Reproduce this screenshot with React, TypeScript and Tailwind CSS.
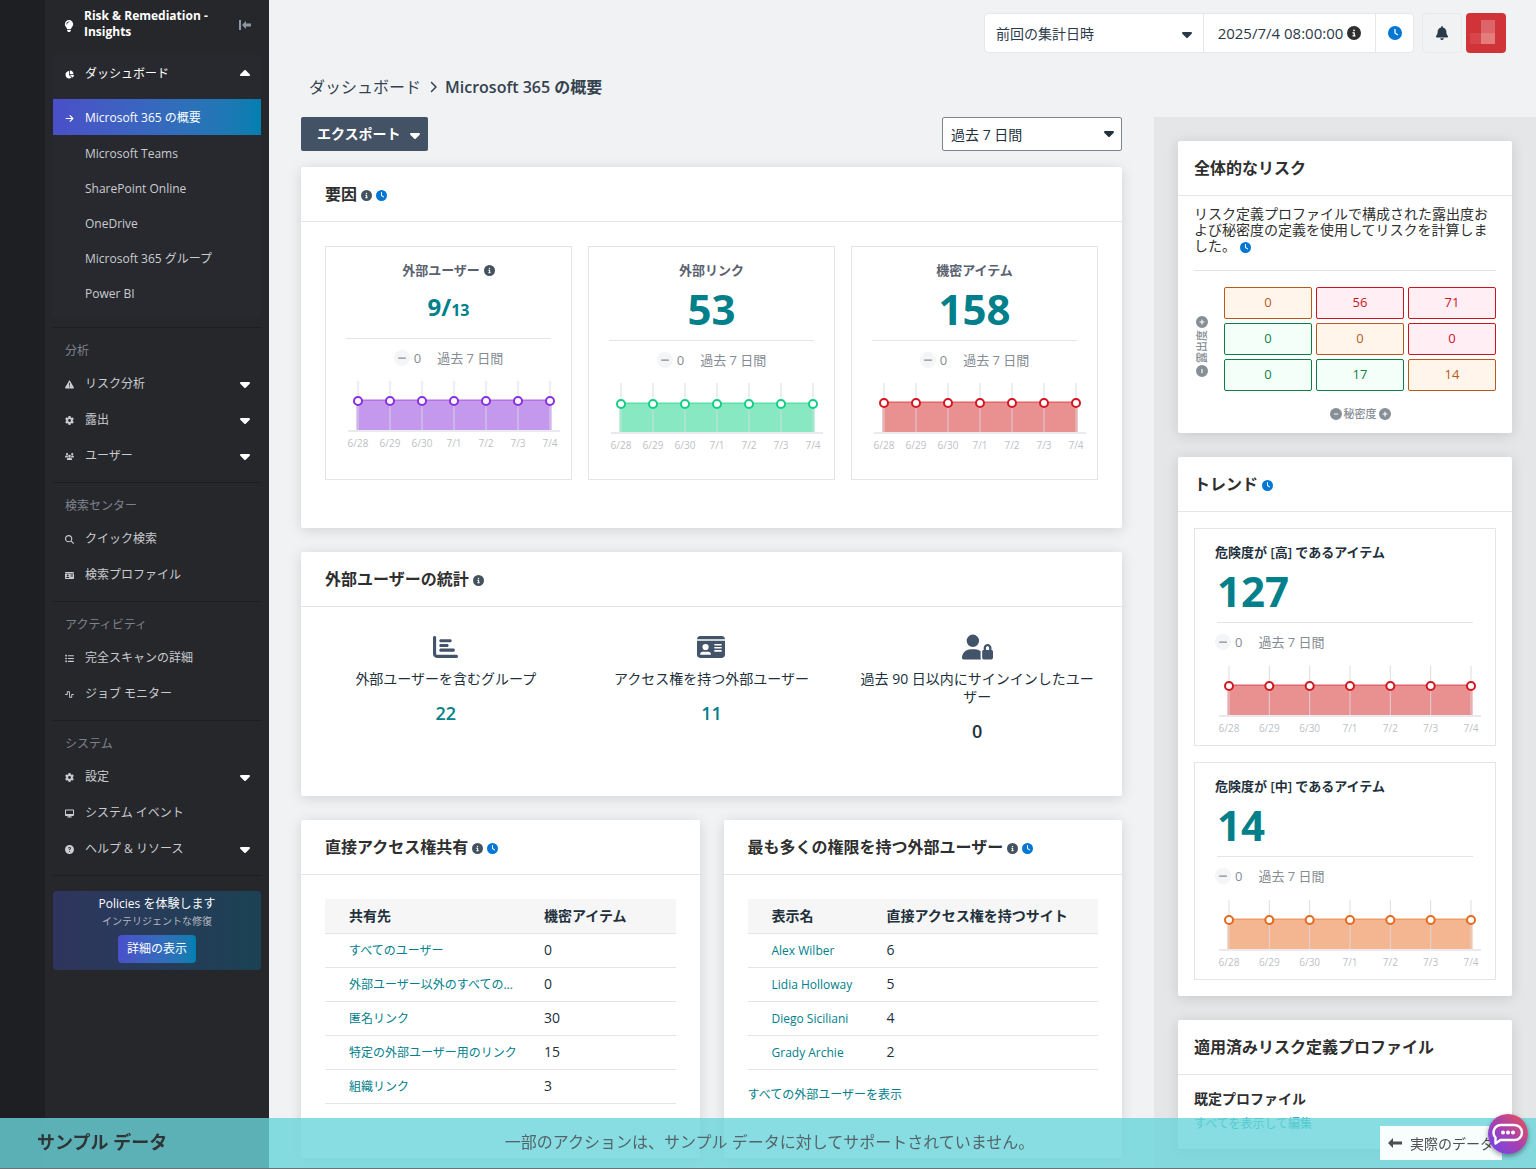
import type { ReactNode } from 'react'
import type { IconType } from 'react-icons'
import {
  FaArrowRight,
  FaBell,
  FaCaretDown,
  FaCaretUp,
  FaChartBar,
  FaChartPie,
  FaChevronRight,
  FaCircleInfo,
  FaCircleMinus,
  FaCirclePlus,
  FaCircleQuestion,
  FaClock,
  FaDesktop,
  FaGear,
  FaIdCard,
  FaLightbulb,
  FaList,
  FaMagnifyingGlass,
  FaMinus,
  FaTriangleExclamation,
  FaUserLock,
  FaUsers,
  FaWaveSquare,
} from 'react-icons/fa6'

interface NavItem {
  label: string
  icon: IconType
  expandable?: boolean
}

interface NavSection {
  title: string
  items: NavItem[]
}

const dashboardLinks = ['Microsoft Teams', 'SharePoint Online', 'OneDrive', 'Microsoft 365 グループ', 'Power BI']

const navSections: NavSection[] = [
  {
    title: '分析',
    items: [
      { label: 'リスク分析', icon: FaTriangleExclamation, expandable: true },
      { label: '露出', icon: FaGear, expandable: true },
      { label: 'ユーザー', icon: FaUsers, expandable: true },
    ],
  },
  {
    title: '検索センター',
    items: [
      { label: 'クイック検索', icon: FaMagnifyingGlass },
      { label: '検索プロファイル', icon: FaIdCard },
    ],
  },
  {
    title: 'アクティビティ',
    items: [
      { label: '完全スキャンの詳細', icon: FaList },
      { label: 'ジョブ モニター', icon: FaWaveSquare },
    ],
  },
  {
    title: 'システム',
    items: [
      { label: '設定', icon: FaGear, expandable: true },
      { label: 'システム イベント', icon: FaDesktop },
      { label: 'ヘルプ & リソース', icon: FaCircleQuestion, expandable: true },
    ],
  },
]

const days = ['6/28', '6/29', '6/30', '7/1', '7/2', '7/3', '7/4']

const sharedWith = [
  { name: 'すべてのユーザー', count: 0 },
  { name: '外部ユーザー以外のすべての...', count: 0 },
  { name: '匿名リンク', count: 30 },
  { name: '特定の外部ユーザー用のリンク', count: 15 },
  { name: '組織リンク', count: 3 },
]

const topUsers = [
  { name: 'Alex Wilber', count: 6 },
  { name: 'Lidia Holloway', count: 5 },
  { name: 'Diego Siciliani', count: 4 },
  { name: 'Grady Archie', count: 2 },
]

const riskStyles = {
  high: 'border-[#c9151f] bg-[#ffeef4] text-[#c9151f]',
  medium: 'border-[#b85a1e] bg-[#fff5ea] text-[#b85a1e]',
  low: 'border-[#0b8043] bg-[#f5fffa] text-[#0b8043]',
}

const riskCells: { value: number; level: keyof typeof riskStyles }[] = [
  { value: 0, level: 'medium' },
  { value: 56, level: 'high' },
  { value: 71, level: 'high' },
  { value: 0, level: 'low' },
  { value: 0, level: 'medium' },
  { value: 0, level: 'high' },
  { value: 0, level: 'low' },
  { value: 17, level: 'low' },
  { value: 14, level: 'medium' },
]

function Sidebar() {
  return (
    <div className="flex shrink-0 bg-[#26272b] text-xs text-[#c9ccd1]">
      <div className="w-[45px] bg-[#1e1f23]" />
      <nav className="w-56 px-2" aria-label="メイン メニュー">
        <div className="flex h-[55px] pl-[10px] pr-[10px] pt-2">
          <span className="w-[21px]">
            <FaLightbulb className="mt-3 text-xs text-white" />
          </span>
          <p className="flex-1 font-bold leading-4 text-white">
            Risk &amp; Remediation -<br />
            Insights
          </p>
          <button type="button" aria-label="メニューを折りたたむ" className="mt-3 self-start text-[#8f96a3]">
            <svg width="12" height="10" viewBox="0 0 12 10" fill="currentColor">
              <path d="M0 0h2v10H0zM3 5l4-4v2.600h5v2.800H7V9z" />
            </svg>
          </button>
        </div>

        <div className="bg-[#28292e] pb-[6px]">
          <button type="button" className="mb-2 flex h-9 w-full items-center pl-3 pr-2 pt-[2px] text-white">
            <span className="w-5">
              <FaChartPie className="text-[9px]" />
            </span>
            <span className="flex-1 text-left">ダッシュボード</span>
            <FaCaretUp className="text-base" />
          </button>
          <a
            href="#overview"
            className="flex h-9 items-center bg-linear-to-r from-[#4a4fc9] to-[#007fb0] pl-3 pt-[2px] text-white"
          >
            <span className="w-5">
              <FaArrowRight className="text-[9px]" />
            </span>
            Microsoft 365 の概要
          </a>
          <div className="pt-px">
            {dashboardLinks.map((label) => (
              <a key={label} href="#dashboard" className="flex h-[35px] items-center pl-8">
                {label}
              </a>
            ))}
          </div>
        </div>
        <div className="h-[10px]" />

        {navSections.map((section) => (
          <section key={section.title} className="border-t border-[#1c1d20] pb-2 pt-[13px]">
            <h2 className="mb-[5px] pl-3 leading-5 text-[#7d838e]">{section.title}</h2>
            {section.items.map(({ label, icon: Icon, expandable }) => (
              <a key={label} href="#menu" className="flex h-9 items-center pl-3 pr-2">
                <span className="w-5">
                  <Icon className="text-[9px]" />
                </span>
                <span className="flex-1">{label}</span>
                {expandable && <FaCaretDown className="text-base text-white" />}
              </a>
            ))}
          </section>
        ))}

        <div className="border-t border-[#1c1d20] pt-[15px]">
          <div className="flex flex-col items-center rounded bg-linear-to-r from-[#2f355e] to-[#1b4254] pb-[7px] pt-1">
            <p className="leading-[18px] text-white">Policies を体験します</p>
            <p className="text-[10px] leading-4 text-[#b4b8c0]">インテリジェントな修復</p>
            <button
              type="button"
              className="mt-[6px] h-7 rounded bg-linear-to-r from-[#4a4fc9] to-[#007fb0] px-[9px] text-white"
            >
              詳細の表示
            </button>
          </div>
        </div>
      </nav>
    </div>
  )
}

function Header() {
  return (
    <header className="flex h-[66px] items-center justify-end pr-[30px] text-[#2b3a4a]">
      <div className="flex h-10 rounded border border-[#e6e7e9] bg-white">
        <div className="relative w-[219px] border-r border-[#e6e7e9]">
          <select
            aria-label="集計日時"
            className="h-full w-full appearance-none bg-transparent pl-[11px] pr-8 text-[14px] outline-none"
          >
            <option>前回の集計日時</option>
          </select>
          <FaCaretDown className="pointer-events-none absolute right-2 top-3 text-base" />
        </div>
        <div className="flex w-[172px] items-center justify-center gap-1 border-r border-[#e6e7e9] text-[15px]">
          2025/7/4 08:00:00
          <FaCircleInfo className="text-[14px] text-[#2f2f2f]" />
        </div>
        <button type="button" aria-label="更新時刻" className="flex w-[37px] items-center justify-center">
          <FaClock className="text-[14px] text-[#0077d4]" />
        </button>
      </div>
      <button
        type="button"
        aria-label="通知"
        className="ml-2 flex h-10 w-10 items-center justify-center rounded border border-[#e8e9eb]"
      >
        <FaBell className="text-[14px]" />
      </button>
      <button type="button" aria-label="アカウント" className="ml-1 flex h-10 w-10 items-start rounded bg-[#d13438]">
        <svg width="40" height="40" viewBox="0 0 40 40">
          <path d="M15 7h14v13H15z" fill="#dd6468" />
          <path d="M4 20h11v11H4z" fill="#d5454a" />
          <path d="M15 20h14v11H15z" fill="#e57d7c" />
        </svg>
      </button>
    </header>
  )
}

function Card({
  title,
  info,
  clock,
  narrow,
  children,
}: {
  title: string
  info?: boolean
  clock?: boolean
  narrow?: boolean
  children: ReactNode
}) {
  return (
    <section className="rounded-xs bg-white shadow-[0_2px_14px_rgba(0,0,0,0.13)]">
      <div
        className={`flex h-[55px] items-center gap-1 border-b border-[#e4e5e7] pb-px text-base font-bold text-[#2f2f2f] ${
          narrow ? 'px-4' : 'px-6'
        }`}
      >
        <h2>{title}</h2>
        {info && <FaCircleInfo className="mt-[3px] text-[11px] text-[#43525f]" />}
        {clock && <FaClock className="mt-[3px] text-[11px] text-[#0077d4]" />}
      </div>
      {children}
    </section>
  )
}

interface ChartProps {
  width: number
  start: number
  end: number
  y: number
  line: string
  fill: string
}

// Area chart with one flat value per day
function AreaChart({ width, start, end, y, line, fill }: ChartProps) {
  const step = (end - start) / (days.length - 1)
  return (
    <svg viewBox={`0 0 ${width} 70`} className="block w-full" role="img" aria-label="過去 7 日間">
      {days.map((day, i) => (
        <path key={day} d={`M${start + i * step} 0V50`} stroke="#dcdde3" />
      ))}
      <rect x={start - 1.5} y={y - 1} width={end - start + 3} height={51 - y} fill={fill} />
      <path d={`M${start} ${y - 1}H${end}`} stroke={line} strokeOpacity="0.7" />
      {days.map((day, i) => (
        <path key={day} d={`M${start + i * step} ${y}V50`} stroke="#dcdde3" strokeOpacity="0.8" />
      ))}
      <path d={`M${start - 10} 50H${end + 10}`} stroke="#e9e9ee" strokeWidth="2" />
      {days.map((day, i) => (
        <g key={day}>
          <circle cx={start + i * step} cy={y} r="4" fill="#fff" stroke={line} strokeWidth="2" />
          <text x={start + i * step} y="66" textAnchor="middle" fontSize="10" fill="#bdbfc5">
            {day}
          </text>
        </g>
      ))}
    </svg>
  )
}

function Delta() {
  return (
    <p className="flex items-center text-[13px] leading-4 text-[#858c94]">
      <span className="flex h-4 w-4 items-center justify-center rounded-full bg-[#f3f5f7]">
        <FaMinus className="text-[10px]" />
      </span>
      <span className="ml-1">0</span>
      <span className="ml-4">過去 7 日間</span>
    </p>
  )
}

function FactorCard({
  title,
  info,
  value,
  chart,
}: {
  title: string
  info?: boolean
  value: ReactNode
  chart: { y: number; line: string; fill: string }
}) {
  return (
    <div className="flex flex-col items-center border border-[#e4e5e7] pb-[26px] pt-3">
      <h3 className="flex items-center gap-1 text-[13px] font-semibold leading-[22px] text-[#5a6270]">
        {title}
        {info && <FaCircleInfo className="text-[11px] text-[#43525f]" />}
      </h3>
      <div className="w-full px-5">
        <div className="border-b border-[#e4e5e7] text-center font-bold text-[#00808a]">{value}</div>
      </div>
      <div className="mb-[15px] mt-[11px]">
        <Delta />
      </div>
      <AreaChart width={245} start={32} end={224} {...chart} />
    </div>
  )
}

function TrendCard({
  title,
  value,
  line,
  fill,
}: {
  title: string
  value: number
  line: string
  fill: string
}) {
  return (
    <div className="border border-[#e4e5e7] pb-[9px] pt-3">
      <h3 className="px-5 text-[13px] font-semibold leading-[22px] text-[#22303c]">{title}</h3>
      <p className="mx-[22px] border-b border-[#e4e5e7] pb-[3px] text-[42px] font-bold leading-[56px] text-[#00808a]">
        {value}
      </p>
      <div className="mb-4 mt-[11px] px-5">
        <Delta />
      </div>
      <AreaChart width={300} start={34} end={276} y={20} line={line} fill={fill} />
    </div>
  )
}

function UserStat({
  icon: Icon,
  iconSize,
  label,
  value,
  link,
}: {
  icon: IconType
  iconSize: string
  label: string
  value: number
  link?: boolean
}) {
  return (
    <div className="flex flex-col items-center px-3 text-center text-[#22303c]">
      <Icon className={`h-7 text-[#43546a] ${iconSize}`} />
      <p className="mt-[9px] text-[14px] leading-[18px]">{label}</p>
      {link ? (
        <a href="#users" className="mt-[13px] text-lg font-semibold leading-6 text-[#00808a]">
          {value}
        </a>
      ) : (
        <p className="mt-[13px] text-lg font-semibold leading-6">{value}</p>
      )}
    </div>
  )
}

function DataTable({
  nameHeader,
  countHeader,
  rows,
  firstCol,
}: {
  nameHeader: string
  countHeader: string
  rows: { name: string; count: number }[]
  firstCol: string
}) {
  return (
    <table className="w-full table-fixed text-left text-[#22303c]">
      <thead>
        <tr className="h-[34px] border-b border-[#e4e5e7] bg-[#f6f6f6] text-[14px]">
          <th className={`pl-6 font-semibold ${firstCol}`}>{nameHeader}</th>
          <th className="font-semibold">{countHeader}</th>
        </tr>
      </thead>
      <tbody>
        {rows.map((row) => (
          <tr key={row.name} className="h-[34px] border-b border-[#e4e5e7]">
            <td className="whitespace-nowrap pl-6 pt-[2px] text-xs text-[#00808a]">
              <a href="#detail">{row.name}</a>
            </td>
            <td className="pb-[2px] text-[14px]">{row.count}</td>
          </tr>
        ))}
      </tbody>
    </table>
  )
}

function RiskMatrix() {
  return (
    <div className="mx-4 border-t border-[#e4e5e7] pb-[11px] pt-4">
      <div className="flex items-center">
        <div className="flex w-[30px] justify-start pt-[14px]">
          <div className="flex rotate-180 items-center gap-[2px] text-[11px] leading-4 text-[#868e96] [writing-mode:vertical-rl]">
            <FaCircleMinus className="rotate-90 text-xs" />
            <span className="font-medium [text-orientation:sideways]">露出度</span>
            <FaCirclePlus className="text-xs" />
          </div>
        </div>
        <div className="grid flex-1 grid-cols-3 gap-1">
          {riskCells.map((cell, i) => (
            <button
              key={i}
              type="button"
              className={`h-8 rounded-xs border text-[13px] ${riskStyles[cell.level]}`}
            >
              {cell.value}
            </button>
          ))}
        </div>
      </div>
      <div className="mt-[15px] flex items-center justify-center gap-[2px] pl-[30px] text-[11px] leading-4 text-[#868e96]">
        <FaCircleMinus className="text-xs" />
        <span className="font-medium">秘密度</span>
        <FaCirclePlus className="text-xs" />
      </div>
    </div>
  )
}

function SampleBanner() {
  return (
    <div className="fixed inset-x-0 bottom-0 flex h-[51px] items-center border-b border-[#6b7376] bg-[#69d4da]/80">
      <p className="flex-1 pb-[2px] pl-[37px] text-lg font-bold text-[#2f3436]">サンプル データ</p>
      <p className="pb-[2px] text-base text-[#55646a]">
        一部のアクションは、サンプル データに対してサポートされていません。
      </p>
      <div className="flex flex-1 justify-end pr-[34px]">
        <button
          type="button"
          className="flex h-[34px] w-[122px] items-center gap-2 bg-white/95 pl-2 text-[14px] whitespace-nowrap text-[#4f4f4f]"
        >
          <svg width="14" height="10" viewBox="0 0 14 10" fill="currentColor">
            <path d="M0 5l5-5v3.500h9v3H5V10z" />
          </svg>
          実際のデータ
        </button>
      </div>
      <button
        type="button"
        aria-label="チャット"
        className="absolute -top-1 right-2 flex h-10 w-10 items-center justify-center rounded-full bg-linear-to-tr from-[#6a3cf0] via-[#a83fae] to-[#f0473c] shadow-[0_2px_5px_rgba(0,0,0,0.4)]"
      >
        <svg width="32" height="24" viewBox="0 0 32 24" fill="none" stroke="#fff" strokeWidth="2.4">
          <path
            d="M9.500 3h13a7.500 7.500 0 0 1 0 15H8.500L3.500 21.500V15.500A7.500 7.500 0 0 1 9.500 3z"
            strokeLinejoin="round"
          />
          <g fill="#fff" stroke="none">
            <circle cx="11" cy="10.500" r="2" />
            <circle cx="16" cy="10.500" r="2" />
            <circle cx="21" cy="10.500" r="2" />
          </g>
        </svg>
      </button>
    </div>
  )
}

export default function App() {
  return (
    <div className="flex min-h-screen bg-[#f1f2f4] font-['Open_Sans','Noto_Sans_CJK_JP',sans-serif]">
      <Sidebar />

      <div className="flex min-w-0 flex-1 flex-col">
        <Header />
        <nav
          aria-label="パンくずリスト"
          className="flex h-[51px] items-start gap-[6px] pl-10 pt-[9px] text-base text-[#34424f]"
        >
          <a href="#dashboard">ダッシュボード</a>
          <FaChevronRight className="mt-[6px] text-xs" />
          <span className="font-semibold">Microsoft 365 の概要</span>
        </nav>

        <div className="flex flex-1">
          <main className="min-w-0 flex-1 px-8 pb-3">
            <div className="mb-4 flex justify-between">
              <button
                type="button"
                className="flex h-[34px] items-center gap-[6px] rounded-xs bg-[#435264] pb-[2px] pl-4 pr-[5px] text-[14px] font-bold text-white"
              >
                エクスポート
                <FaCaretDown className="mt-1 text-base" />
              </button>
              <div className="relative w-[180px]">
                <select
                  aria-label="期間"
                  className="h-[34px] w-full appearance-none rounded-xs border border-[#7c8591] bg-white pl-2 pr-8 text-[14px] text-[#22303c] outline-none"
                >
                  <option>過去 7 日間</option>
                </select>
                <FaCaretDown className="pointer-events-none absolute right-[5px] top-2 text-base text-[#22303c]" />
              </div>
            </div>

            <div className="flex flex-col gap-6">
              <Card title="要因" info clock>
                <div className="grid grid-cols-3 gap-4 px-6 pb-12 pt-6">
                  <FactorCard
                    title="外部ユーザー"
                    info
                    value={
                      <p className="h-[57px] pt-[10px] text-2xl">
                        9/<span className="text-base">13</span>
                      </p>
                    }
                    chart={{ y: 20, line: '#8a2fdb', fill: '#c499ed' }}
                  />
                  <FactorCard
                    title="外部リンク"
                    value={<p className="pb-1 text-[42px] leading-[55px]">53</p>}
                    chart={{ y: 21, line: '#12ce85', fill: '#87e8c2' }}
                  />
                  <FactorCard
                    title="機密アイテム"
                    value={<p className="pb-1 text-[42px] leading-[55px]">158</p>}
                    chart={{ y: 20, line: '#d3171f', fill: '#e99191' }}
                  />
                </div>
              </Card>

              <Card title="外部ユーザーの統計" info>
                <div className="grid grid-cols-3 px-3 pb-[53px] pt-[26px]">
                  <UserStat
                    icon={FaChartBar}
                    iconSize="text-[25px]"
                    label="外部ユーザーを含むグループ"
                    value={22}
                    link
                  />
                  <UserStat
                    icon={FaIdCard}
                    iconSize="text-[28px]"
                    label="アクセス権を持つ外部ユーザー"
                    value={11}
                    link
                  />
                  <UserStat
                    icon={FaUserLock}
                    iconSize="text-[31px]"
                    label="過去 90 日以内にサインインしたユーザー"
                    value={0}
                  />
                </div>
              </Card>

              <div className="grid grid-cols-2 gap-6">
                <Card title="直接アクセス権共有" info clock>
                  <div className="px-6 pb-[54px] pt-6">
                    <DataTable
                      nameHeader="共有先"
                      countHeader="機密アイテム"
                      rows={sharedWith}
                      firstCol="w-[219px]"
                    />
                  </div>
                </Card>
                <Card title="最も多くの権限を持つ外部ユーザー" info clock>
                  <div className="px-6 pb-6 pt-6">
                    <DataTable
                      nameHeader="表示名"
                      countHeader="直接アクセス権を持つサイト"
                      rows={topUsers}
                      firstCol="w-[139px]"
                    />
                    <a href="#external-users" className="mt-4 inline-block text-xs leading-[18px] text-[#00808a]">
                      すべての外部ユーザーを表示
                    </a>
                  </div>
                </Card>
              </div>
            </div>
          </main>

          <aside className="flex w-[382px] shrink-0 flex-col gap-6 bg-[#e5e6e8] px-6 pb-3 pt-6">
            <Card title="全体的なリスク" narrow>
              <p className="px-4 pb-4 pt-[10px] text-[14px] leading-4 text-[#2f2f2f]">
                リスク定義プロファイルで構成された露出度および秘密度の定義を使用してリスクを計算しました。
                <FaClock className="ml-1 inline text-[11px] text-[#0077d4]" />
              </p>
              <RiskMatrix />
            </Card>

            <Card title="トレンド" clock narrow>
              <div className="flex flex-col gap-4 p-4">
                <TrendCard title="危険度が [高] であるアイテム" value={127} line="#d3171f" fill="#e99191" />
                <TrendCard title="危険度が [中] であるアイテム" value={14} line="#e5691e" fill="#f4b691" />
              </div>
            </Card>

            <Card title="適用済みリスク定義プロファイル" narrow>
              <div className="px-4 pb-3 pt-3">
                <p className="text-[14px] font-semibold leading-6 text-[#2f2f2f]">既定プロファイル</p>
                <a href="#profiles" className="block text-xs leading-[26px] text-[#00a3ad]">
                  すべてを表示して編集
                </a>
              </div>
            </Card>
          </aside>
        </div>
      </div>

      <SampleBanner />
    </div>
  )
}
